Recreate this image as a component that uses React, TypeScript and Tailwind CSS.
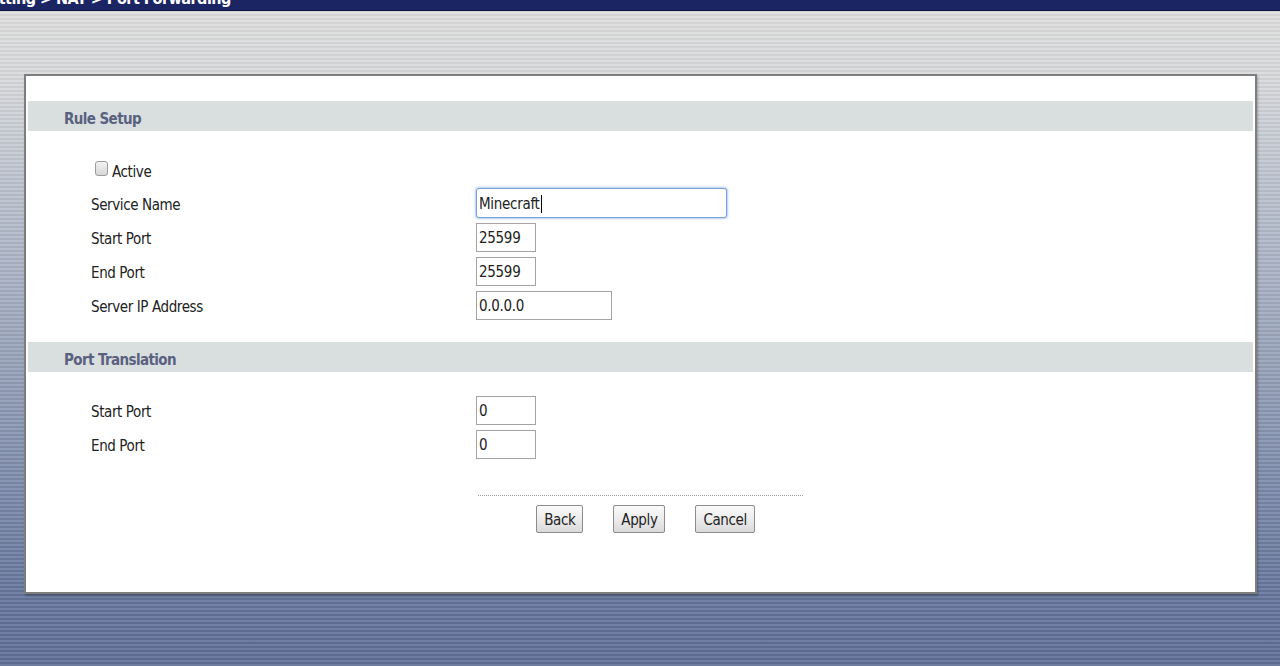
import React from "react";

const font = "font-['Liberation_Sans_Narrow','DejaVu_Sans_Condensed',sans-serif]";

type FieldProps = {
  label: string;
  value: string;
  width: string;
};

const Field = ({ label, value, width }: FieldProps) => (
  <div className="grid h-[34px] grid-cols-[385px_1fr] items-center">
    <span className="pt-[4px] text-[15px] tracking-[-0.4px] text-[#222]">{label}</span>
    <input
      readOnly
      defaultValue={value}
      className={`${width} h-[29px] border border-[#a4a4a4] bg-white px-[2px] pt-[2px] text-[15px] tracking-[-0.3px] text-[#222] outline-none ${font}`}
    />
  </div>
);

const SectionBar = ({ title }: { title: string }) => (
  <div className="flex h-[30px] items-center bg-[#d9dfdf] pl-[36px] pt-[6px]">
    <span className="text-[15px] font-bold tracking-[-0.6px] text-[#5a6180]">{title}</span>
  </div>
);

const Btn = ({ children }: { children: React.ReactNode }) => (
  <button
    className={`h-[28px] rounded-[2px] border border-[#8c8c8c] bg-[linear-gradient(180deg,#fafafa_0%,#ececec_50%,#dadada_100%)] px-[7px] pt-[3px] text-[15px] tracking-[-0.4px] text-[#222] ${font}`}
  >
    {children}
  </button>
);

export default function App() {
  return (
    <div
      className={`flex h-[666px] w-full flex-col overflow-hidden ${font} bg-[image:repeating-linear-gradient(180deg,rgba(255,255,255,0.10)_0px,rgba(255,255,255,0.10)_2px,rgba(0,0,0,0.045)_2px,rgba(0,0,0,0.045)_4px),linear-gradient(180deg,#dfdfdf_0%,#d7d8da_12%,#bcc3cf_27%,#8e9ab4_60%,#64749b_90%,#5d6d95_100%)]`}
    >
      {/* breadcrumb strip, mostly scrolled out of view */}
      <div className="h-[11px] shrink-0 overflow-hidden border-b border-[#0c1445] bg-[#1c2564]">
        <div className="-mt-[13px] -ml-[90px] whitespace-nowrap text-[16px] font-bold tracking-[-0.5px] text-white">
          Network Setting &gt; NAT &gt; Port Forwarding
        </div>
      </div>

      <div className="pl-[24px] pt-[63px]">
        <div className="h-[520px] w-[1233px] border-2 border-[#7e7e7e] bg-white p-[2px] shadow-[1px_2px_2px_rgba(0,0,0,0.25)]">
          <div className="h-[23px]" />
          <SectionBar title="Rule Setup" />

          <div className="pl-[63px]">
            <div className="flex h-[55px] items-end pb-[3px] pl-[4px]">
              <span className="mb-[7px] inline-block h-[15px] w-[13px] rounded-[3px] border border-[#9c9c9c] bg-[linear-gradient(180deg,#f2f2f2,#d6d6d6)]" />
              <span className="ml-[4px] text-[15px] tracking-[-0.4px] text-[#222]">Active</span>
            </div>
            <div className="grid h-[34px] grid-cols-[385px_1fr] items-center">
              <span className="pt-[4px] text-[15px] tracking-[-0.4px] text-[#222]">Service Name</span>
              <div className="flex h-[30px] w-[251px] items-center rounded-[3px] border border-[#7aa3dc] bg-white px-[2px] pt-[2px] shadow-[0_0_2px_1px_rgba(122,163,220,0.55)]">
                <span className="text-[15px] tracking-[-0.3px] text-[#222]">Minecraft</span>
                <span className="ml-[1px] h-[18px] w-px bg-black" />
              </div>
            </div>
            <Field label="Start Port" value="25599" width="w-[60px]" />
            <Field label="End Port" value="25599" width="w-[60px]" />
            <Field label="Server IP Address" value="0.0.0.0" width="w-[136px]" />
          </div>

          <div className="h-[20px]" />
          <SectionBar title="Port Translation" />

          <div className="pl-[63px] pt-[21px]">
            <Field label="Start Port" value="0" width="w-[60px]" />
            <Field label="End Port" value="0" width="w-[60px]" />
          </div>

          <div className="ml-[450px] mt-[34px] w-[325px]">
            <div className="border-t border-dotted border-[#9a9a9a]" />
            <div className="mt-[9px] flex justify-center gap-[30px] pl-[10px]">
              <Btn>Back</Btn>
              <Btn>Apply</Btn>
              <Btn>Cancel</Btn>
            </div>
          </div>
        </div>
      </div>
    </div>
  );
}
